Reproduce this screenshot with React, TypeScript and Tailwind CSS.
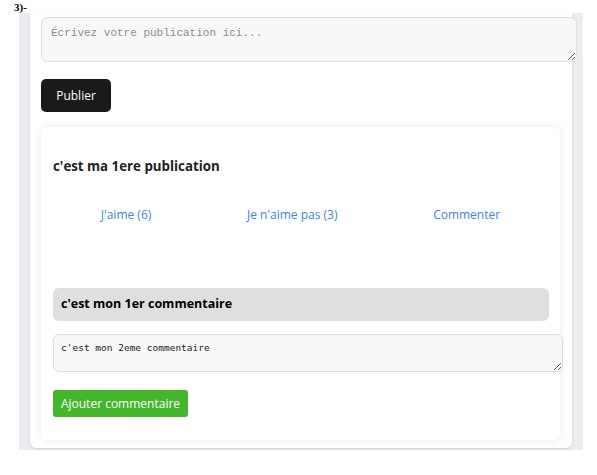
import React from "react";

export default function App() {
  return (
    <div className="min-h-screen bg-white font-['Open_Sans',sans-serif] text-[#222]">
      <div className="pl-[14px] pt-[2px] h-[13px] font-['Liberation_Serif',serif] font-bold text-[11px] leading-[11px] text-black">
        3)-
      </div>

      <div className="ml-[19px] w-[564px] bg-[#ececf1] px-[11px] pb-[2px]">
        <div className="bg-white rounded-b-[6px] shadow-[0_1px_3px_rgba(0,0,0,0.12)] pt-[4px] pl-[11px] pr-[12px] pb-[8px]">
          <textarea
            placeholder="Écrivez votre publication ici..."
            className="block w-[536px] h-[45px] rounded-[6px] border border-[#e0e0e0] bg-[#f8f8f8] px-[9px] pt-[7px] font-['Liberation_Mono',monospace] text-[11px] placeholder:text-[#8c8c8c] outline-none"
          />

          <button className="mt-[17px] h-[33px] w-[70px] rounded-[5px] bg-[#1a1a1a] text-[12px] text-white">
            Publier
          </button>

          <div className="mt-[15px] w-[519px] rounded-[6px] bg-white shadow-[0_0_8px_rgba(0,0,0,0.09)] px-[12px] pt-[29px] pb-[23px]">
            <h3 className="text-[13.3px] leading-[20px] font-bold">
              c'est ma 1ere publication
            </h3>

            <div className="mt-[30px] flex justify-around text-[12px] leading-[18px] text-[#3b82f6]">
              <button>J'aime (6)</button>
              <button>Je n'aime pas (3)</button>
              <button>Commenter</button>
            </div>

            <div className="mt-[64px] flex h-[33px] w-[496px] items-center rounded-[6px] bg-[#dfdfdf] px-[8px] text-[12.5px] font-bold text-black">
              c'est mon 1er commentaire
            </div>

            <textarea
              defaultValue="c'est mon 2eme commentaire"
              className="mt-[13px] block w-[510px] h-[38px] rounded-[6px] border border-[#dcdcdc] bg-[#f8f8f8] px-[7px] pt-[6px] font-['DejaVu_Sans_Mono',monospace] text-[9.5px] text-[#222] outline-none"
            />

            <button className="mt-[18px] h-[27px] w-[135px] rounded-[3px] bg-[#44b62c] text-[12px] text-white">
              Ajouter commentaire
            </button>
          </div>
        </div>
      </div>
    </div>
  );
}
